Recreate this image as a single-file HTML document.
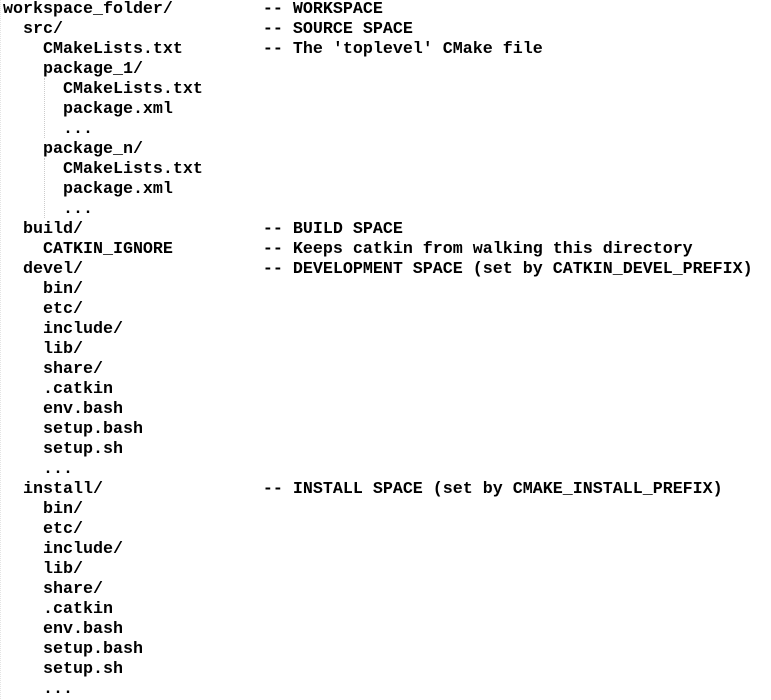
<!DOCTYPE html>
<html><head><style>
html,body{margin:0;padding:0;background:#fff;width:771px;height:699px;overflow:hidden}
pre{margin:0;position:absolute;left:3px;top:0px;font-family:"Liberation Mono",monospace;font-weight:bold;font-size:16.67px;line-height:20px;color:#000}
.d{position:absolute;left:44px;width:0;border-left:1px dotted #ccc}
</style></head><body>
<div class="d" style="top:78px;height:60px"></div>
<div class="d" style="top:158px;height:60px"></div>
<div class="d" style="left:0;top:0;height:699px;border-color:#e4e4e4"></div>
<pre>workspace_folder/         -- WORKSPACE
  src/                    -- SOURCE SPACE
    CMakeLists.txt        -- The 'toplevel' CMake file
    package_1/
      CMakeLists.txt
      package.xml
      ...
    package_n/
      CMakeLists.txt
      package.xml
      ...
  build/                  -- BUILD SPACE
    CATKIN_IGNORE         -- Keeps catkin from walking this directory
  devel/                  -- DEVELOPMENT SPACE (set by CATKIN_DEVEL_PREFIX)
    bin/
    etc/
    include/
    lib/
    share/
    .catkin
    env.bash
    setup.bash
    setup.sh
    ...
  install/                -- INSTALL SPACE (set by CMAKE_INSTALL_PREFIX)
    bin/
    etc/
    include/
    lib/
    share/
    .catkin
    env.bash
    setup.bash
    setup.sh
    ...</pre>
</body></html>
